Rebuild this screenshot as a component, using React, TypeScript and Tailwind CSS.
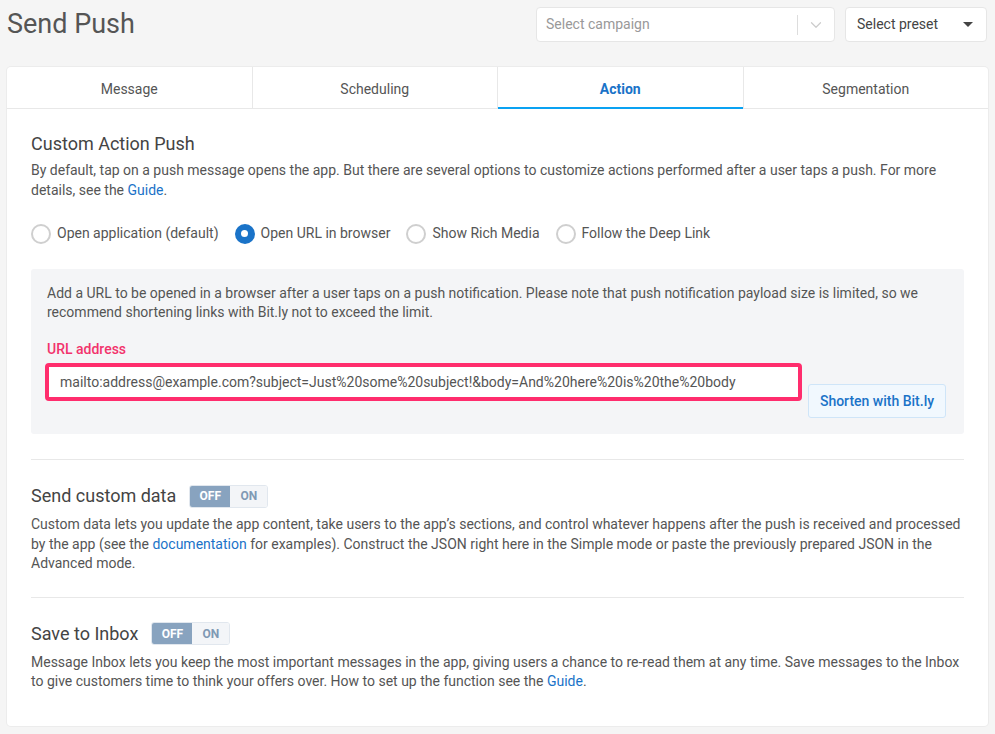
import { ChevronDown } from 'lucide-react';

const tabs = ['Message', 'Scheduling', 'Action', 'Segmentation'];
const actions = [
  { label: 'Open application (default)', checked: false },
  { label: 'Open URL in browser', checked: true },
  { label: 'Show Rich Media', checked: false },
  { label: 'Follow the Deep Link', checked: false },
];

function Toggle() {
  return (
    <div className="flex h-[23px] w-[79px] overflow-hidden rounded-[3px] border border-[#e1e7ee] text-[12px] font-bold">
      <span className="flex w-[40px] items-center justify-center bg-[#88a3bf] text-white">OFF</span>
      <span className="flex flex-1 items-center justify-center bg-[#f3f5f8] text-[#7f99b4]">ON</span>
    </div>
  );
}

function Radio({ checked }: { checked: boolean }) {
  if (checked) {
    return (
      <span className="flex h-[20px] w-[20px] items-center justify-center rounded-full bg-[#1a73c8]">
        <span className="h-[7px] w-[7px] rounded-full bg-white" />
      </span>
    );
  }
  return <span className="h-[20px] w-[20px] rounded-full border-2 border-[#cfcfcf] bg-white" />;
}

export default function App() {
  return (
    <div className="min-h-[734px] bg-[#f5f5f5] px-[7px] pt-[7px] pb-[8px] font-['Roboto',sans-serif] text-[#555]">
      {/* header */}
      <div className="flex h-[35px] items-center justify-between">
        <h1 className="-mt-[1px] text-[27px] leading-[35px] text-[#555]">Send Push</h1>
        <div className="mr-[1px] flex gap-[10px]">
          <div className="flex h-[35px] w-[299px] items-center rounded-[4px] border border-[#e6e6e6] bg-white">
            <span className="flex-1 pl-[9px] text-[14px] text-[#999]">Select campaign</span>
            <span className="h-[20px] w-px bg-[#ddd]" />
            <span className="flex w-[36px] justify-center text-[#ccc]">
              <ChevronDown size={18} strokeWidth={1.6} />
            </span>
          </div>
          <div className="flex h-[35px] w-[142px] items-center justify-between rounded-[4px] border border-[#e6e6e6] bg-white pl-[11px] pr-[13px]">
            <span className="text-[14px] text-[#444]">Select preset</span>
            <span className="h-0 w-0 border-x-[5px] border-t-[5px] border-x-transparent border-t-[#444]" />
          </div>
        </div>
      </div>

      {/* card */}
      <div className="mt-[25px] rounded-[4px] bg-white shadow-[0_0_0_1px_#ececec]">
        <div className="flex h-[42px] border-b border-[#e8e8e8]">
          {tabs.map((t, i) => (
            <div
              key={t}
              className={`relative flex flex-1 items-center justify-center pt-[3px] text-[14px] ${i < 3 ? 'border-r border-[#e8e8e8]' : ''} ${t === 'Action' ? 'font-bold text-[#1a73c8]' : 'text-[#555]'}`}
            >
              {t}
              {t === 'Action' && <span className="absolute -bottom-px left-0 right-0 h-[2px] bg-[#0aa2f2]" />}
            </div>
          ))}
        </div>

        <div className="px-[24px] pt-[23px] pb-[34px]">
          <h2 className="text-[18px] leading-[24px] text-[#444]">Custom Action Push</h2>
          <p className="mt-[5px] text-[14px] leading-[19.5px]">
            By default, tap on a push message opens the app. But there are several options to customize actions performed after a user taps a push. For more details, see the{' '}
            <a className="text-[#1a73c8]">Guide</a>.
          </p>

          <div className="mt-[23px] flex items-center">
            {actions.map((a) => (
              <label key={a.label} className="mr-[16px] flex items-center gap-[6px] text-[14px]">
                <Radio checked={a.checked} />
                {a.label}
              </label>
            ))}
          </div>

          <div className="mt-[25px] rounded-[3px] bg-[#f4f5f7] px-[16px] pt-[15px] pb-[16px]">
            <p className="text-[14px] leading-[19px]">
              Add a URL to be opened in a browser after a user taps on a push notification. Please note that push notification payload size is limited, so we recommend shortening links with Bit.ly not to exceed the limit.
            </p>
            <div className="mt-[18px] text-[14px] font-medium leading-[18px] text-[#f2336c]">URL address</div>
            <div className="mt-[5px] flex items-start gap-[6px]">
              <div className="-ml-[2px] h-[38px] w-[757px] rounded-[4px] border-[4px] border-[#ff2d6d] bg-white pl-[11px] text-[14px] leading-[30px] text-[#555]">
                mailto:address@example.com?subject=Just%20some%20subject!&amp;body=And%20here%20is%20the%20body
              </div>
              <button className="mt-[21px] h-[34px] w-[138px] rounded-[3px] border border-[#cfe5f8] bg-[#f1f8fe] text-[14px] font-medium text-[#1a73c8]">
                Shorten with Bit.ly
              </button>
            </div>
          </div>

          <div className="mt-[25px] h-px bg-[#e8e8e8]" />

          <div className="mt-[24px] flex items-center gap-[13px]">
            <h3 className="text-[18px] leading-[24px] text-[#444]">Send custom data</h3>
            <Toggle />
          </div>
          <p className="mt-[7px] text-[14px] leading-[19.5px]">
            Custom data lets you update the app content, take users to the app’s sections, and control whatever happens after the push is received and processed by the app (see the{' '}
            <a className="text-[#1a73c8]">documentation</a> for examples). Construct the JSON right here in the Simple mode or paste the previously prepared JSON in the Advanced mode.
          </p>

          <div className="mt-[23px] h-px bg-[#e8e8e8]" />

          <div className="mt-[24px] flex items-center gap-[13px]">
            <h3 className="text-[18px] leading-[24px] text-[#444]">Save to Inbox</h3>
            <Toggle />
          </div>
          <p className="mt-[7px] text-[14px] leading-[19.5px]">
            Message Inbox lets you keep the most important messages in the app, giving users a chance to re-read them at any time. Save messages to the Inbox to give customers time to think your offers over. How to set up the function see the{' '}
            <a className="text-[#1a73c8]">Guide</a>.
          </p>
        </div>
      </div>
    </div>
  );
}
